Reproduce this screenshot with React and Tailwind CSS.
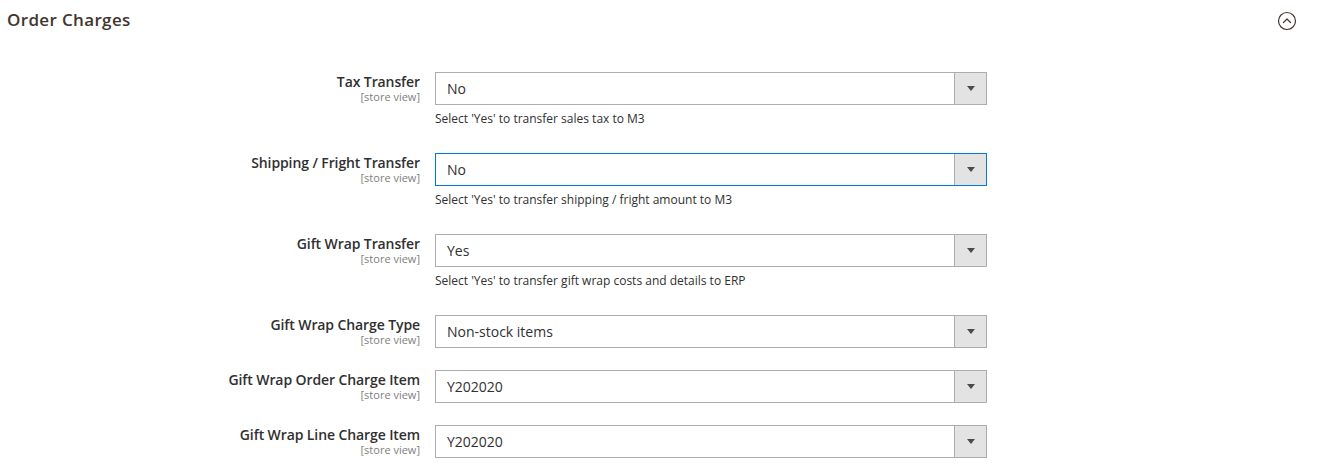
import { useState } from 'react';

const fields = [
  { label: 'Tax Transfer', value: 'No', note: "Select 'Yes' to transfer sales tax to M3" },
  { label: 'Shipping / Fright Transfer', value: 'No', note: "Select 'Yes' to transfer shipping / fright amount to M3", focused: true },
  { label: 'Gift Wrap Transfer', value: 'Yes', note: "Select 'Yes' to transfer gift wrap costs and details to ERP" },
  { label: 'Gift Wrap Charge Type', value: 'Non-stock items' },
  { label: 'Gift Wrap Order Charge Item', value: 'Y202020' },
  { label: 'Gift Wrap Line Charge Item', value: 'Y202020' },
];

function CollapseIcon() {
  return (
    <svg width="20" height="20" viewBox="0 0 20 20" fill="none">
      <circle cx="10" cy="10" r="8.5" stroke="#41362f" strokeWidth="1.2" />
      <path d="M6.5 11.5 L10 8 L13.5 11.5" stroke="#41362f" strokeWidth="1.2" strokeLinecap="round" strokeLinejoin="round" />
    </svg>
  );
}

function SelectBox({ value, focused }) {
  return (
    <div
      className={`flex h-[33px] w-[552px] border bg-white ${
        focused ? 'border-[#007bdb]' : 'border-[#adadad]'
      }`}
    >
      <div className="flex flex-1 items-center pl-[11px] text-[14px] text-[#303030]">{value}</div>
      <div className="flex w-[32px] items-center justify-center border-l border-[#adadad] bg-[#e3e3e3]">
        <svg width="8" height="5" viewBox="0 0 8 5">
          <path d="M0 0 H8 L4 5 Z" fill="#514943" />
        </svg>
      </div>
    </div>
  );
}

function Field({ field }) {
  return (
    <div className={`flex ${field.note ? 'mb-[25px]' : 'mb-[22px]'}`}>
      <div className="w-[435px] shrink-0 pr-[15px] text-right">
        <div className="text-[14px] font-semibold leading-[19px] tracking-[-0.1px] text-[#303030]">{field.label}</div>
        <div className="text-[11px] leading-[12px] text-[#808080]">[store view]</div>
      </div>
      <div>
        <SelectBox value={field.value} focused={field.focused} />
        {field.note && (
          <div className="mt-[5px] text-[12px] leading-[18px] text-[#303030]">{field.note}</div>
        )}
      </div>
    </div>
  );
}

export default function App() {
  const [open, setOpen] = useState(true);

  return (
    <div className="min-h-[476px] bg-white" style={{ fontFamily: '"Open Sans", sans-serif' }}>
      <div className="flex h-[40px] items-center justify-between pl-[7px] pr-[27px]">
        <h2 className="text-[17px] font-semibold tracking-[0.35px] text-[#41362f]">Order Charges</h2>
        <button onClick={() => setOpen(!open)} className="mt-[1px]">
          <CollapseIcon />
        </button>
      </div>

      {open && (
        <div className="pt-[32px]">
          {fields.map((f) => (
            <Field key={f.label} field={f} />
          ))}
        </div>
      )}
    </div>
  );
}
